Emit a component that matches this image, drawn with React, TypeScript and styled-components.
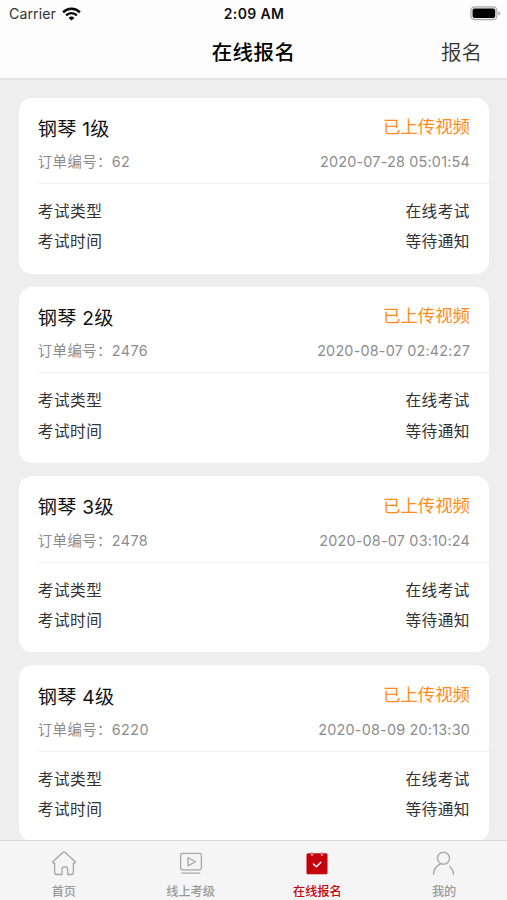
import React from "react";
import styled, { createGlobalStyle } from "styled-components";

const Global = createGlobalStyle`
  * { box-sizing: border-box; }
  html, body { margin: 0; padding: 0; overflow: hidden; }
  body { font-family: Inter, "Noto Sans CJK SC", sans-serif; background: #eeeeee; color: #111; }
`;

const Screen = styled.div`
  width: 507px;
  height: 900px;
  display: flex;
  flex-direction: column;
  overflow: hidden;
  background: #eeeeee;
`;

const Header = styled.header`
  flex: none;
  height: 80px;
  background: #fdfdfd;
  border-bottom: 2px solid #e3e3e3;
`;

const StatusBar = styled.div`
  height: 27px;
  display: grid;
  grid-template-columns: 1fr auto 1fr;
  align-items: center;
  padding: 0 6px 0 9px;
`;

const Carrier = styled.div`
  display: flex;
  align-items: center;
  gap: 6px;
  font-size: 14.2px;
  letter-spacing: 0.05px;
  color: #333;
`;

const Clock = styled.div`
  font-size: 14px;
  font-weight: 600;
  letter-spacing: 0.35px;
  margin-left: -2px;
  color: #111;
`;

const Battery = styled.svg`
  justify-self: end;
`;

const NavBar = styled.nav`
  height: 52px;
  display: grid;
  grid-template-columns: 1fr auto 1fr;
  align-items: center;
  padding: 0 25px;
`;

const NavTitle = styled.h1`
  grid-column: 2;
  margin: 0;
  font-size: 20.5px;
  line-height: 30px;
  letter-spacing: 0.4px;
  font-weight: 500;
  color: #000;
`;

const NavAction = styled.button`
  justify-self: end;
  border: 0;
  padding: 0;
  background: none;
  font: 350 20.5px/30px Inter, "Noto Sans CJK SC", sans-serif;
  color: #333;
`;

const List = styled.main`
  flex: 1;
  min-height: 0;
  overflow: hidden;
  display: flex;
  flex-direction: column;
  gap: 13.3px;
  padding: 17.6px 18.5px 0 19.3px;
`;

const Card = styled.article`
  flex: none;
  height: 176px;
  border-radius: 13px;
  background: #fff;
  padding-left: 18.5px;
`;

const CardHead = styled.div`
  height: 86.4px;
  padding: 15.6px 18.5px 0 0;
  border-bottom: 1px solid #f0f0f0;
`;

const Row = styled.div<{ $h: number }>`
  height: ${(p) => p.$h}px;
  display: flex;
  align-items: center;
  justify-content: space-between;
  white-space: nowrap;
`;

const Title = styled.h2`
  margin: 0;
  font-size: 19.2px;
  line-height: 28px;
  font-weight: 400;
  letter-spacing: 0.25px;
  color: #111;
`;

const Status = styled.span`
  font-size: 17.4px;
  line-height: 26px;
  margin-top: -3px;
  color: #ff8c1a;
`;

const Meta = styled.span<{ $date?: boolean }>`
  font-size: 14.4px;
  line-height: 20px;
  letter-spacing: ${(p) => (p.$date ? 0.2 : 0.4)}px;
  color: #8c8c8c;
`;

const CardBody = styled.div`
  padding: 12.7px 18.5px 0 0;
`;

const Field = styled.span`
  font-size: 15.7px;
  line-height: 24px;
  letter-spacing: 0.45px;
  color: #333;
`;

const TabBar = styled.footer`
  flex: none;
  height: 60px;
  display: grid;
  grid-template-columns: repeat(4, 1fr);
  background: #f5f5f5;
  border-top: 1px solid #dcdcdc;
`;

const Tab = styled.button<{ $active?: boolean }>`
  display: flex;
  flex-direction: column;
  align-items: center;
  border: 0;
  background: none;
  padding: 8px 0 0 1px;
  color: ${(p) => (p.$active ? "#c4000c" : "#999")};
  font: 500 12.2px/18px Inter, "Noto Sans CJK SC", sans-serif;
`;

const TabIcon = styled.svg`
  flex: none;
  width: 28px;
  height: 28px;
  margin-bottom: 6px;
  fill: none;
  stroke: #a6a6a6;
  stroke-width: 1.3;
  stroke-linecap: round;
  stroke-linejoin: round;
`;

const orders = [
  { title: "钢琴 1级", id: "62", date: "2020-07-28 05:01:54" },
  { title: "钢琴 2级", id: "2476", date: "2020-08-07 02:42:27" },
  { title: "钢琴 3级", id: "2478", date: "2020-08-07 03:10:24" },
  { title: "钢琴 4级", id: "6220", date: "2020-08-09 20:13:30" },
];

const HomeIcon = () => (
  <TabIcon viewBox="0 0 28 28">
    <path d="M4.6 14H3.2q-1-.6-.2-1.4L12.8 3.5q1.2-1 2.4 0l9.8 9.1q.8.8-.2 1.4h-1.4v9.6q0 1.9-1.8 1.9h-4v-5.3q0-2.3-2.4-2.3h-.8q-2.4 0-2.4 2.3v5.3H6.4q-1.8 0-1.8-1.9z" />
  </TabIcon>
);

const VideoIcon = () => (
  <TabIcon viewBox="0 0 28 28">
    <rect x="3.6" y="4.3" width="20.8" height="16.6" rx="1.8" />
    <path d="M11 8.7v8.2l7.6-4.1zM5.2 24.2h17.6" />
  </TabIcon>
);

const CalendarIcon = () => (
  <TabIcon viewBox="0 0 28 28">
    <rect x="3.5" y="4.2" width="21" height="21" rx="1.5" fill="#c4000c" stroke="none" />
    <path d="M9 4.1v1.6M19 4.1v1.6" stroke="#efb0b0" strokeWidth="2.4" />
    <path d="M9 4v1.4M19 4v1.4" stroke="#d0333b" strokeWidth="1.1" />
    <path d="m10.5 15.1 3 2.6 4.3-4.5" stroke="#fff" strokeWidth="1.5" />
  </TabIcon>
);

const PersonIcon = () => (
  <TabIcon viewBox="0 0 28 28">
    <circle cx="13.5" cy="9.2" r="6" />
    <path d="M3.5 25.3c.2-5.1 3.1-8.7 7-10.5M19.7 17.5c2.2 1.8 3.6 4.6 3.8 7.8" />
  </TabIcon>
);

export default function App() {
  return (
    <Screen>
      <Global />
      <Header>
        <StatusBar>
          <Carrier>
            Carrier
            <svg width="19" height="14" viewBox="0 0 19 14">
              <path d="M1.1 5.3a12 12 0 0 1 16.8 0" fill="none" stroke="#000" strokeWidth="2.5" />
              <path d="M4.1 8.4a7.7 7.7 0 0 1 10.8 0" fill="none" stroke="#000" strokeWidth="2.3" />
              <path d="M6.6 10.9a4.1 4.1 0 0 1 5.8 0L9.5 13.6z" fill="#000" />
            </svg>
          </Carrier>
          <Clock>2:09 AM</Clock>
          <Battery width="31" height="15" viewBox="0 0 31 15">
            <rect x="0.9" y="0.9" width="26" height="12.8" rx="3.8" fill="#eee" stroke="#aaa" strokeWidth="1.2" />
            <rect x="2.6" y="2.6" width="22.6" height="9.4" rx="2" fill="#000" />
            <path d="M28.5 5v4.6q1.8-.7 1.8-2.3T28.5 5z" fill="#aaa" />
          </Battery>
        </StatusBar>
        <NavBar>
          <NavTitle>在线报名</NavTitle>
          <NavAction>报名</NavAction>
        </NavBar>
      </Header>
      <List>
        {orders.map((order) => (
          <Card key={order.id}>
            <CardHead>
              <Row $h={31}>
                <Title>{order.title}</Title>
                <Status>已上传视频</Status>
              </Row>
              <Row $h={36}>
                <Meta>订单编号：{order.id}</Meta>
                <Meta $date>{order.date}</Meta>
              </Row>
            </CardHead>
            <CardBody>
              <Row $h={30.5}>
                <Field>考试类型</Field>
                <Field>在线考试</Field>
              </Row>
              <Row $h={30.5}>
                <Field>考试时间</Field>
                <Field>等待通知</Field>
              </Row>
            </CardBody>
          </Card>
        ))}
      </List>
      <TabBar>
        <Tab><HomeIcon />首页</Tab>
        <Tab><VideoIcon />线上考级</Tab>
        <Tab $active><CalendarIcon />在线报名</Tab>
        <Tab><PersonIcon />我的</Tab>
      </TabBar>
    </Screen>
  );
}
